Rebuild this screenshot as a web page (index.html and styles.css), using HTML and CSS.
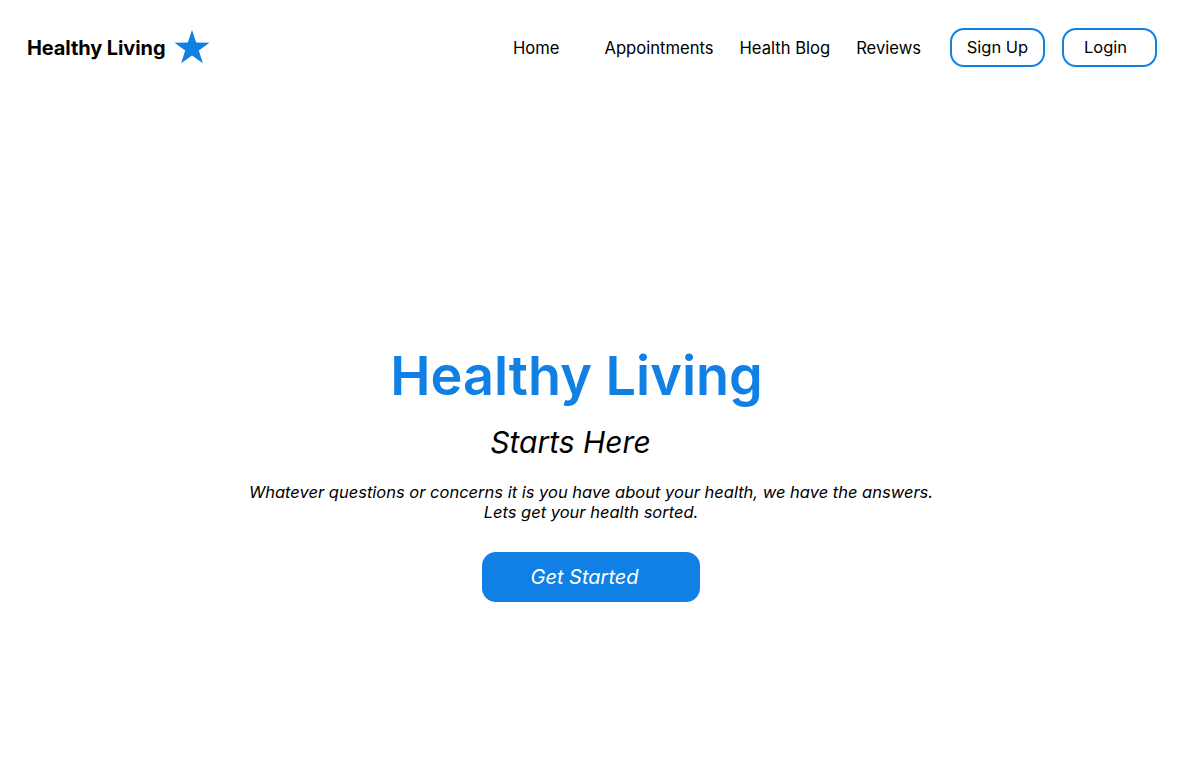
FILE: index.html
```html
<!DOCTYPE html>
<html lang="en">
<head>
<meta charset="utf-8">
<title>Healthy Living</title>
<link rel="stylesheet" href="styles.css">
</head>
<body>
<header class="topbar">
  <div class="brand">
    <span class="brand-name">Healthy Living</span>
    <svg class="brand-star" width="36" height="34" viewBox="0 0 36 34" aria-hidden="true">
      <polygon points="18,0 22.2,12.6 35.5,12.7 24.8,20.6 28.8,33.3 18,25.6 7.2,33.3 11.2,20.6 0.5,12.7 13.8,12.6" fill="#1180e5"/>
    </svg>
  </div>
  <nav class="nav">
    <a class="nav-link home" href="#">Home</a>
    <a class="nav-link" href="#">Appointments</a>
    <a class="nav-link" href="#">Health Blog</a>
    <a class="nav-link" href="#">Reviews</a>
    <a class="nav-btn signup" href="#">Sign Up</a>
    <a class="nav-btn login" href="#">Login</a>
  </nav>
</header>
<main class="hero">
  <h1 class="hero-title">Healthy Living</h1>
  <p class="hero-sub">Starts Here</p>
  <p class="hero-text">Whatever questions or concerns it is you have about your health, we have the answers.<br>Lets get your health sorted.</p>
  <a class="cta" href="#">Get Started</a>
</main>
</body>
</html>
```
FILE: styles.css
```css
* { box-sizing: border-box; }
html, body { margin: 0; padding: 0; background: #fff; }
body {
  font-family: "Inter", "Noto Sans", sans-serif;
  color: #000;
  width: 1182px;
  height: 780px;
  overflow: hidden;
}
a { color: inherit; text-decoration: none; }

.topbar {
  display: flex;
  align-items: center;
  justify-content: space-between;
  height: 96px;
  padding: 0 25px 0 27px;
}
.brand {
  display: flex;
  align-items: center;
  gap: 9px;
}
.brand-name {
  font-size: 20px;
  font-weight: 700;
  letter-spacing: -0.1px;
}
.brand-star { display: block; margin-top: -3px; }

.nav {
  display: flex;
  align-items: center;
  margin-top: -1px;
}
.nav-link {
  font-size: 16.6px;
  margin-right: 26px;
}
.nav-link.home { margin-right: 45px; }
.nav-link:nth-child(4) { margin-right: 29px; }
.nav-btn {
  display: flex;
  align-items: center;
  justify-content: center;
  width: 95px;
  height: 39px;
  border: 2px solid #1180e5;
  border-radius: 14px;
  font-size: 16.5px;
  padding-bottom: 2px;
}
.nav-btn.signup { margin-right: 17px; }
.nav-btn.login { padding-right: 8px; }

.hero {
  display: flex;
  flex-direction: column;
  align-items: center;
  padding-top: 248px;
}
.hero-title {
  margin: 0 0 0 -29px;
  font-size: 54px;
  font-weight: 600;
  color: #1180e5;
  line-height: 64px;
}
.hero-sub {
  margin: 16px 0 0 -41px;
  font-size: 30px;
  font-style: italic;
  line-height: 36px;
}
.hero-text {
  margin: 22px 0 0;
  font-size: 16.5px;
  font-style: italic;
  line-height: 20px;
  text-align: center;
}
.cta {
  margin-top: 30px;
  display: flex;
  align-items: center;
  justify-content: center;
  width: 218px;
  height: 50px;
  padding-right: 13px;
  border-radius: 14px;
  background: #1180e5;
  color: #fff;
  font-size: 20px;
  font-style: italic;
}
```
